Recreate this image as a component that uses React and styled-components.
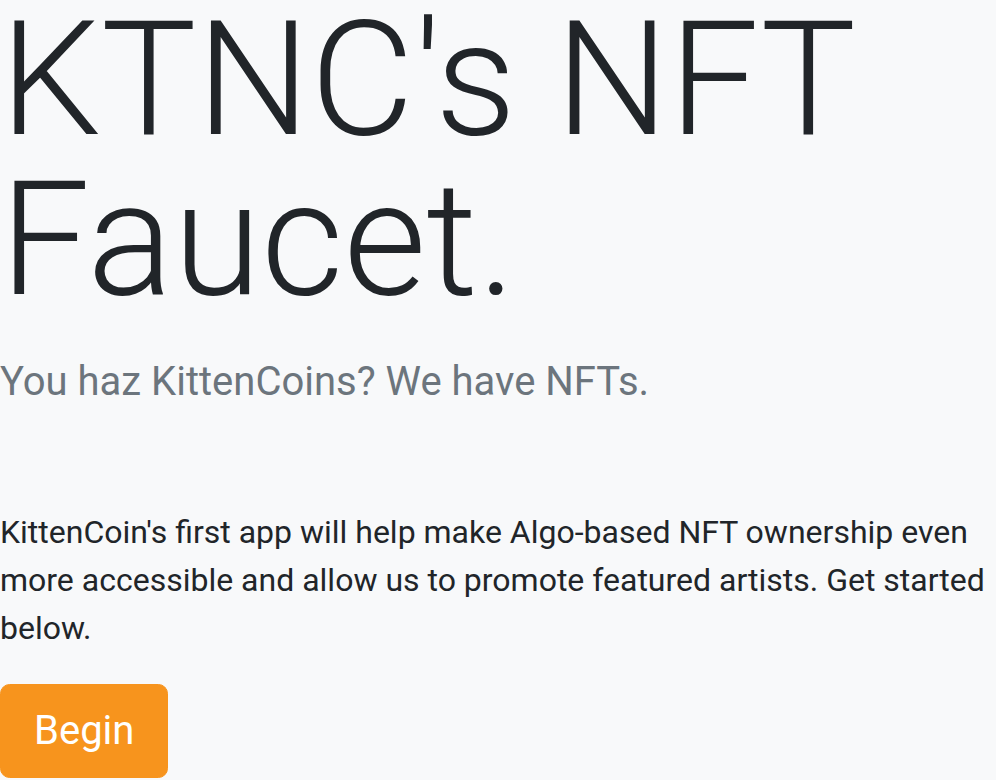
import React from "react";
import styled, { createGlobalStyle } from "styled-components";

const GlobalStyle = createGlobalStyle`
  html, body {
    margin: 0;
    padding: 0;
    background: #f8f9fa;
  }
  body {
    font-family: Roboto, "Liberation Sans", sans-serif;
    font-size: 32px;
    line-height: 1.5;
    color: #212529;
  }
`;

const Hero = styled.main`
  display: flex;
  flex-direction: column;
  align-items: flex-start;
  width: 996px;
`;

const Title = styled.h1`
  margin: 0 0 32px;
  font-size: 160px;
  font-weight: 300;
  line-height: 1;
  letter-spacing: 0;
`;

const Lead = styled.p`
  margin: 0 0 96px;
  font-size: 40px;
  font-weight: 400;
  line-height: 1.5;
  color: #6c757d;
`;

const Blurb = styled.p`
  margin: 0 0 32px;
  font-size: 32px;
  line-height: 1.5;
`;

const Button = styled.button`
  font-family: inherit;
  font-size: 40px;
  line-height: 1.5;
  color: #ffffff;
  background: ${(props) => props.$color};
  border: 1px solid ${(props) => props.$color};
  border-radius: 9.6px;
  padding: 16px 33px;
  cursor: pointer;
`;

const App = () => {
  return (
    <>
      <GlobalStyle />
      <Hero>
        <Title>
          KTNC's NFT
          <br />
          Faucet.
        </Title>
        <Lead>You haz KittenCoins? We have NFTs.</Lead>
        <Blurb>
          KittenCoin's first app will help make Algo-based NFT ownership even
          more accessible and allow us to promote featured artists. Get started
          below.
        </Blurb>
        <Button $color="#f7941d">Begin</Button>
      </Hero>
    </>
  );
};

export default App;
